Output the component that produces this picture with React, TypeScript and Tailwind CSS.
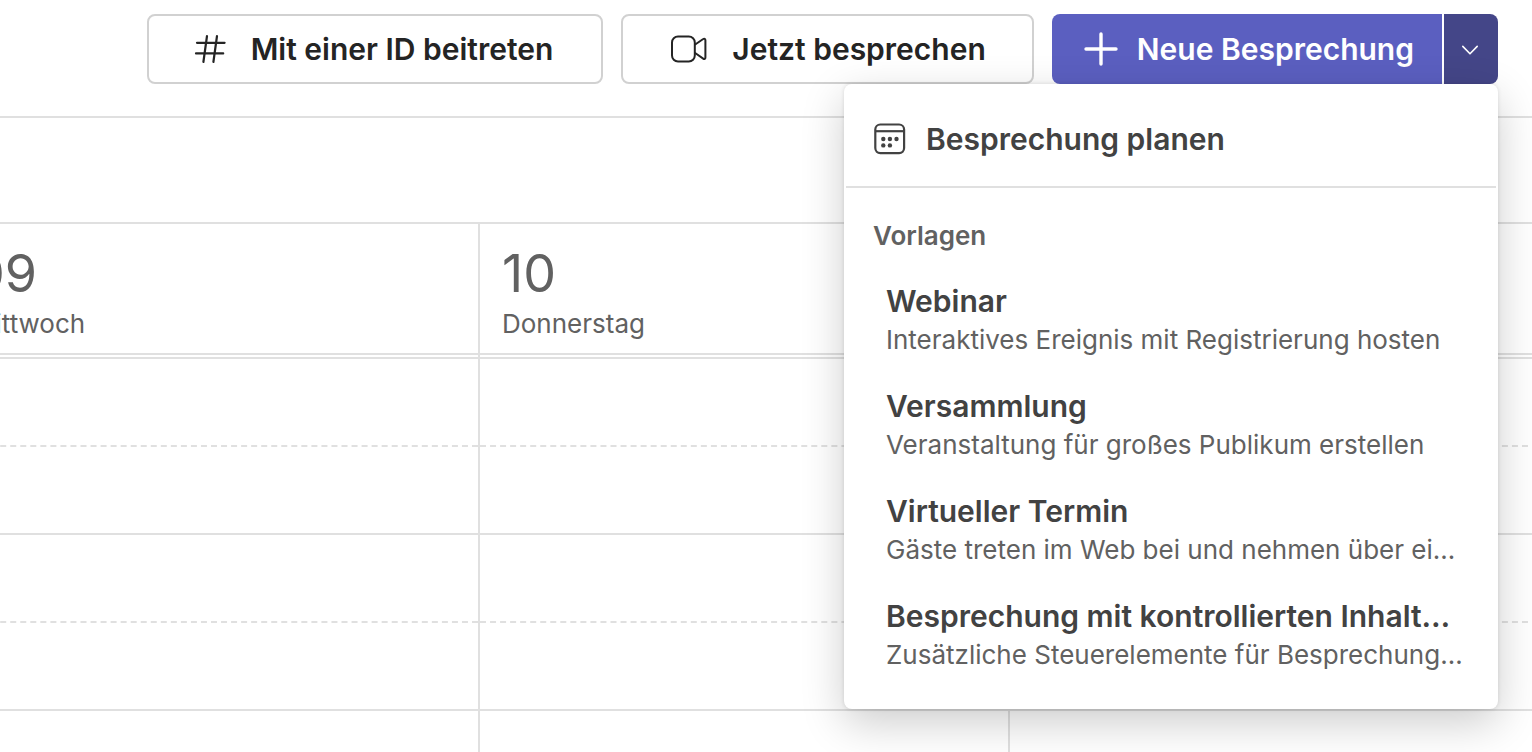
type Template = {
  title: string;
  description: string;
};

type Day = {
  number: string;
  name: string;
};

const templates: Template[] = [
  { title: "Webinar", description: "Interaktives Ereignis mit Registrierung hosten" },
  { title: "Versammlung", description: "Veranstaltung für großes Publikum erstellen" },
  { title: "Virtueller Termin", description: "Gäste treten im Web bei und nehmen über ei…" },
  { title: "Besprechung mit kontrollierten Inhalt…", description: "Zusätzliche Steuerelemente für Besprechung…" },
];

const days: Day[] = [
  { number: "09", name: "Mittwoch" },
  { number: "10", name: "Donnerstag" },
  { number: "11", name: "Freitag" },
];

const slots = ["08:00", "08:30", "09:00", "09:30", "10:00"];

function HashIcon() {
  return (
    <svg className="size-10 shrink-0" viewBox="0 0 40 40" fill="none" stroke="currentColor" strokeWidth="2.2" strokeLinecap="round" aria-hidden="true">
      <path d="M6 13.8H33.6M5 24.4H32.2M16 7L12.4 33M26 7L22.4 33" />
    </svg>
  );
}

function VideoIcon() {
  return (
    <svg className="size-10 shrink-0" viewBox="0 0 40 40" fill="none" stroke="currentColor" strokeWidth="2" strokeLinejoin="round" aria-hidden="true">
      <rect x="4" y="7.5" width="22.8" height="25" rx="6" />
      <path d="M26.8 15.8L35.2 10C36.3 9.2 37.4 9.9 37.4 11.2V28.4C37.4 29.8 36.3 30.4 35.2 29.6L26.8 23.8" />
    </svg>
  );
}

function PlusIcon() {
  return (
    <svg className="size-10 shrink-0" viewBox="0 0 40 40" fill="none" stroke="currentColor" strokeWidth="3.4" strokeLinecap="round" aria-hidden="true">
      <path d="M20 5V35M5 20H35" />
    </svg>
  );
}

function ChevronIcon() {
  return (
    <svg className="size-6" viewBox="0 0 24 24" fill="none" stroke="currentColor" strokeWidth="1.6" strokeLinecap="round" strokeLinejoin="round" aria-hidden="true">
      <path d="M3.8 9.4L11 16.8L18.2 9.4" />
    </svg>
  );
}

function CalendarIcon() {
  return (
    <svg className="size-10 shrink-0" viewBox="0 0 40 40" fill="none" stroke="currentColor" strokeWidth="2.2" aria-hidden="true">
      <rect x="5.3" y="5.5" width="28.8" height="28.6" rx="5" />
      <path d="M5.3 12.2H34" />
      <g fill="currentColor" stroke="none">
        <circle cx="13.3" cy="20" r="2.2" />
        <circle cx="19.9" cy="20" r="2.2" />
        <circle cx="26.5" cy="20" r="2.2" />
        <circle cx="13.3" cy="26.4" r="2.2" />
        <circle cx="19.9" cy="26.4" r="2.2" />
      </g>
    </svg>
  );
}

function NewMeetingMenu() {
  return (
    <div
      role="menu"
      className="absolute top-full right-0 z-10 w-[654px] rounded-lg bg-white pb-[25px] shadow-[0_0_4px_rgba(0,0,0,0.12),0_14px_44px_rgba(0,0,0,0.2)]"
    >
      <button role="menuitem" className="flex h-[102px] w-full items-center gap-4 px-[26px] pt-2 text-[30px] font-semibold text-[#424242]">
        <CalendarIcon />
        Besprechung planen
      </button>

      <div role="separator" className="mx-0.5 h-0.5 bg-[#e0e0e0]" />

      <div className="px-[29px] pt-8 pb-3 text-[26px] leading-8 font-semibold text-[#616161]">Vorlagen</div>

      {templates.map((template) => (
        <button key={template.title} role="menuitem" className="block h-[105px] w-full pt-[7px] pl-[42px] text-left whitespace-nowrap">
          <span className="block text-[30px] leading-10 font-semibold text-[#424242]">{template.title}</span>
          <span className="block text-[26px] leading-[38px] font-normal text-[#616161]">{template.description}</span>
        </button>
      ))}
    </div>
  );
}

export default function App() {
  return (
    <div className="flex h-screen flex-col overflow-hidden bg-white font-['Inter',sans-serif] text-[#242424]">

      {/* ACTIONS */}
      <header className="flex shrink-0 justify-end gap-[18px] border-b-2 border-[#e0e0e0] pt-[14px] pr-[34px] pb-8 text-[30px] font-semibold whitespace-nowrap">
        <button className="flex h-[70px] items-center gap-5 rounded-lg border-2 border-[#d1d1d1] bg-white pr-12 pl-[42px]">
          <HashIcon />
          Mit einer ID beitreten
        </button>

        <button className="flex h-[70px] items-center gap-6 rounded-lg border-2 border-[#d1d1d1] bg-white pr-[46px] pl-[45px]">
          <VideoIcon />
          Jetzt besprechen
        </button>

        <div className="relative flex h-[70px] text-white">
          <button className="flex items-center gap-4 rounded-l-lg bg-[#5b5fc0] pr-7 pl-[29px]">
            <PlusIcon />
            Neue Besprechung
          </button>
          <button aria-label="Weitere Optionen" className="flex w-14 items-center justify-center rounded-r-lg border-l-2 border-white bg-[#444688]">
            <ChevronIcon />
          </button>
          <NewMeetingMenu />
        </div>
      </header>

      {/* TOOLBAR */}
      <div className="h-[106px] shrink-0 border-b-2 border-[#e0e0e0]" />

      {/* WEEK */}
      <main className="-ml-[50px] flex grow">
        {days.map((day) => (
          <section key={day.number} className="flex w-[530px] shrink-0 flex-col border-r-2 border-[#e0e0e0] text-[#616161]">
            <div className="h-[131px] shrink-0 border-b-2 border-[#e0e0e0] px-[22px] pt-5">
              <div className="text-[52px] leading-[60px]">{day.number}</div>
              <div className="text-[26px] leading-10">{day.name}</div>
            </div>
            <div className="mt-0.5 border-t-2 border-[#e0e0e0]">
              {slots.map((slot) => (
                <div key={slot} className="h-[88px] border-b-2 border-[#e0e0e0] odd:border-dashed" />
              ))}
            </div>
          </section>
        ))}
      </main>
    </div>
  );
}
